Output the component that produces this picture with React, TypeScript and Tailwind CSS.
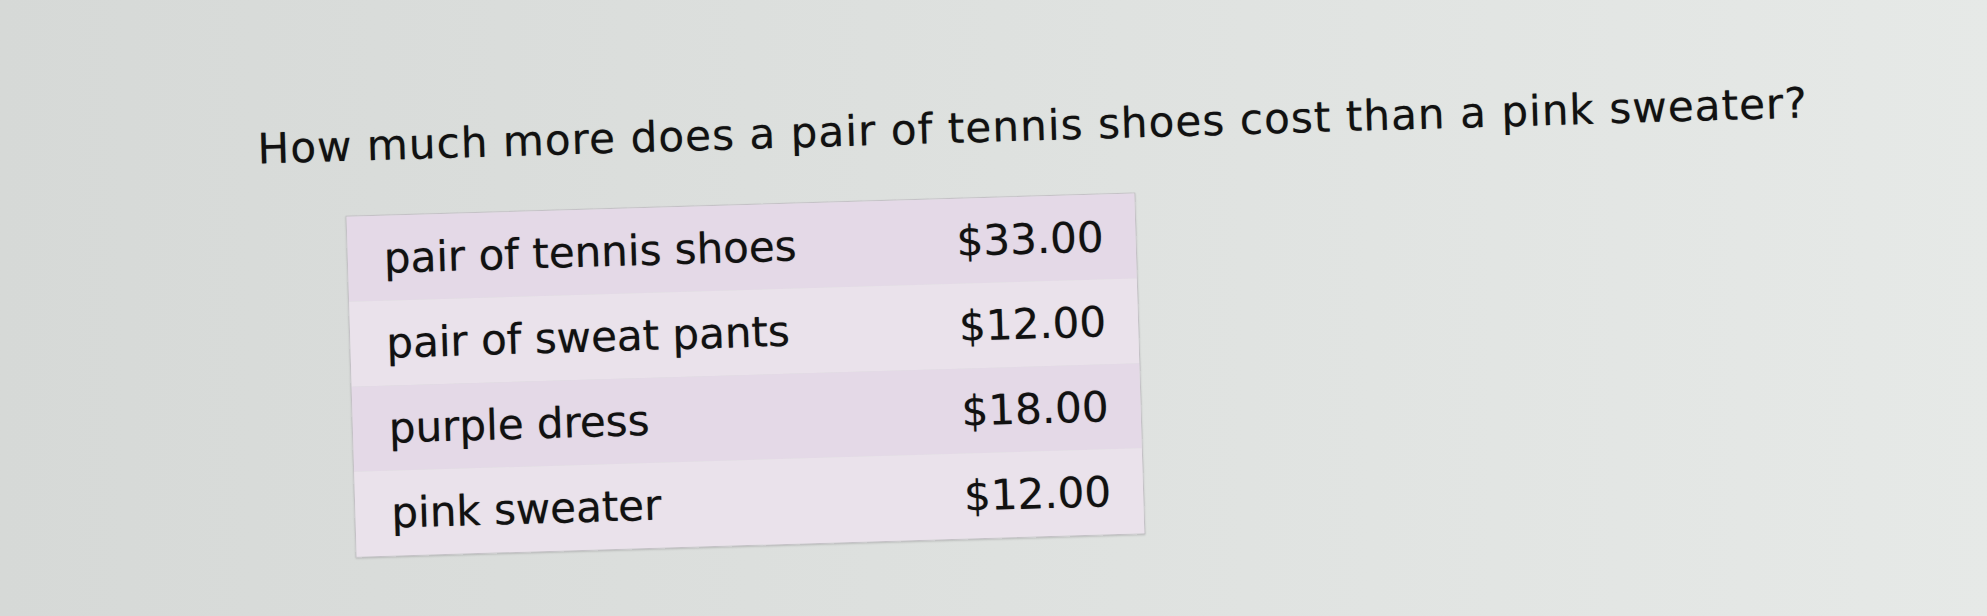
const items = [
  { name: "pair of tennis shoes", price: "$33.00" },
  { name: "pair of sweat pants", price: "$12.00" },
  { name: "purple dress", price: "$18.00" },
  { name: "pink sweater", price: "$12.00" },
];

export default function App() {
  return (
    <div className="h-[616px] w-full overflow-hidden bg-gradient-to-r from-[#d6d9d7] via-[#dee1df] to-[#e6e9e7] font-['DejaVu_Sans',Verdana,sans-serif] text-[#111111] [text-shadow:0_0_1px_rgba(0,0,0,0.45)]">
      {/* the screen was photographed at a slight tilt */}
      <div className="origin-top-left -rotate-[1.7deg] pl-[253px] pt-[136px]">
        <p className="text-[42px] leading-none tracking-[1.1px]">
          How much more does a pair of tennis shoes cost than a pink sweater?
        </p>

        <div className="ml-[86px] mt-[48px] w-[790px] border border-[#c4c1c6] shadow-[0_1px_2px_rgba(0,0,0,0.15)]">
          {items.map((item, i) => (
            <div
              key={item.name}
              className={
                "flex h-[85px] items-center justify-between pl-[36px] pr-[32px] text-[42px] leading-none " +
                (i % 2 === 0 ? "bg-[#e4d9e7]" : "bg-[#eae2eb]")
              }
            >
              <span>{item.name}</span>
              <span>{item.price}</span>
            </div>
          ))}
        </div>
      </div>
    </div>
  );
}
